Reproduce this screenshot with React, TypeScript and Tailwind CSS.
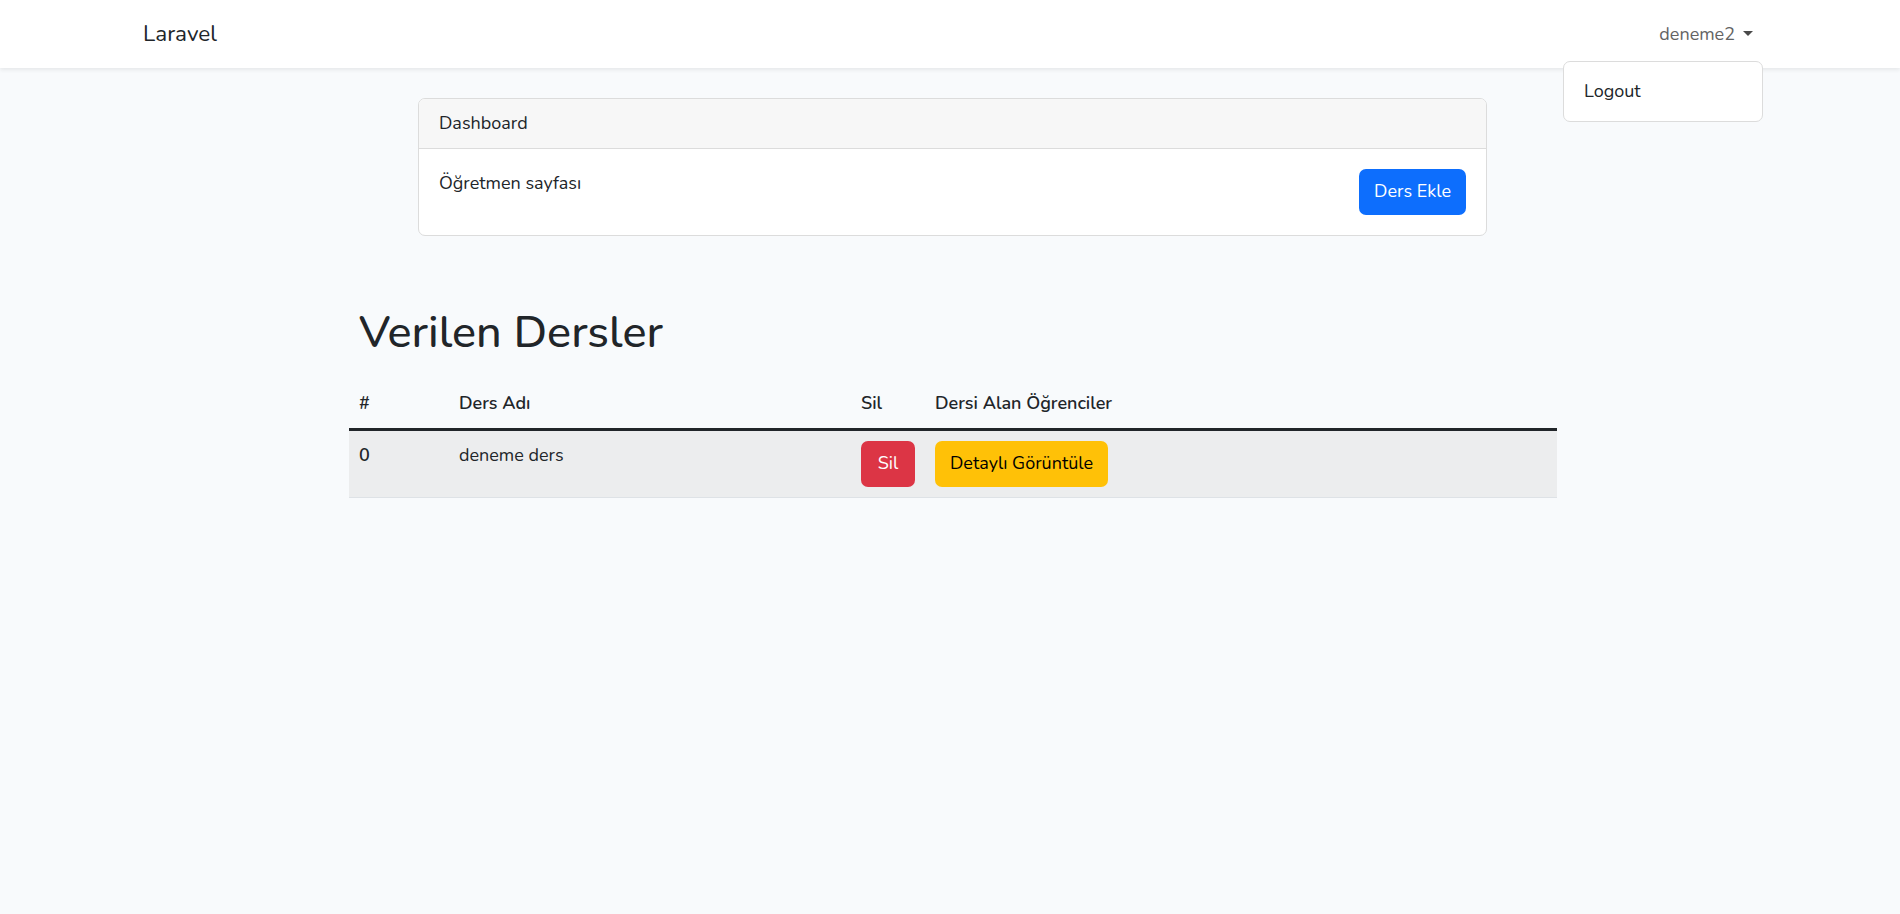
import React from 'react';

const font = { fontFamily: 'Nunito, Lato, "Noto Sans", sans-serif' };

function Navbar() {
    return (
        <nav className="relative h-[68px] bg-white shadow-[0_2px_4px_rgba(0,0,0,0.075)] z-10">
            <div className="flex h-full items-center justify-between pl-[143px] pr-[137px]">
                <a className="text-[22.5px] leading-none text-[#212529]">Laravel</a>
                {/* user dropdown, shown open */}
                <div className="relative h-full flex items-center">
                    <button className="flex items-center px-[10px] text-[18px] leading-[1.6] text-[#636363]">
                        deneme2
                        <span className="ml-[8px] border-t-[5.4px] border-x-[5.4px] border-t-[#4a4a4a] border-x-transparent" />
                    </button>
                    <div className="absolute top-[61px] right-0 w-[200px] rounded-[7px] border border-[#dcdcdc] bg-white py-[10px]">
                        <a className="block px-[20px] py-[5px] text-[18px] leading-[1.6] text-[#212529]">Logout</a>
                    </div>
                </div>
            </div>
        </nav>
    );
}

function DashboardCard() {
    return (
        <div className="ml-[418px] w-[1069px] rounded-[7px] border border-[#dcdcdc] bg-white overflow-hidden">
            <div className="bg-[#f7f7f7] border-b border-[#dcdcdc] px-[20px] py-[10px] text-[18px] leading-[1.6] text-[#212529]">
                Dashboard
            </div>
            <div className="flex justify-between items-start p-[20px]">
                <span className="text-[18px] leading-[1.6] text-[#212529]">Öğretmen sayfası</span>
                <button className="h-[46px] px-[15px] rounded-[7px] bg-[#0d6efd] text-white text-[18px] leading-[1.6]">
                    Ders Ekle
                </button>
            </div>
        </div>
    );
}

export default function App() {
    const dersler = [{ id: 0, ad: 'deneme ders' }];

    return (
        <div className="min-h-screen bg-[#f8fafc] text-[#212529]" style={font}>
            <Navbar />

            <main className="py-[30px]">
                <DashboardCard />

                {/* Verilen dersler tablosu */}
                <div className="ml-[349px] w-[1208px] mt-[70px]">
                    <h1 className="pl-[10px] text-[45px] leading-[1.2] font-medium mb-[19px]">Verilen Dersler</h1>
                    <table className="w-full table-fixed text-[18px] leading-[1.6] border-collapse">
                        <thead>
                            <tr className="border-b-[3px] border-[#212529]">
                                <th className="w-[100px] p-[10px] text-left font-semibold">#</th>
                                <th className="w-[402px] p-[10px] text-left font-semibold">Ders Adı</th>
                                <th className="w-[74px] p-[10px] text-left font-semibold">Sil</th>
                                <th className="p-[10px] text-left font-semibold">Dersi Alan Öğrenciler</th>
                            </tr>
                        </thead>
                        <tbody>
                            {dersler.map((d) => (
                                <tr key={d.id} className="bg-[#ecedee] border-b border-[#dee2e6]">
                                    <th className="p-[10px] text-left align-top font-semibold">{d.id}</th>
                                    <td className="p-[10px] align-top">{d.ad}</td>
                                    <td className="p-[10px] align-top">
                                        <button className="h-[46px] w-[54px] rounded-[7px] bg-[#dc3545] text-white">Sil</button>
                                    </td>
                                    <td className="p-[10px] align-top">
                                        <button className="h-[46px] px-[15px] rounded-[7px] bg-[#ffc107] text-black">Detaylı Görüntüle</button>
                                    </td>
                                </tr>
                            ))}
                        </tbody>
                    </table>
                </div>
            </main>
        </div>
    );
}
